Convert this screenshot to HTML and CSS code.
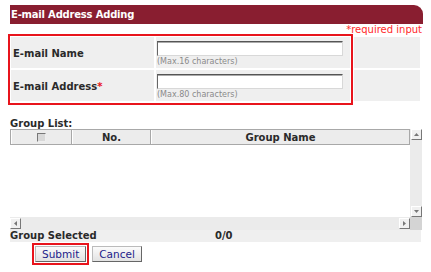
FILE: index.html
```html
<!DOCTYPE html>
<html lang="en">
<head>
  <meta charset="UTF-8" />
  <title>E-mail Address Adding</title>
  <link rel="stylesheet" href="styles.css">
</head>
<body>
  <div class="page">
    <div class="title-bar">E-mail Address Adding</div>
    <div class="required"><span>*required input</span></div>

    <div class="form-area">
      <div class="field-box">
        <div class="label">E-mail Name</div>
        <div class="field">
          <input class="text-input" type="text" />
          <div class="hint">(Max.16 characters)</div>
        </div>
        <div class="label">E-mail Address<span class="star">*</span></div>
        <div class="field">
          <input class="text-input" type="text" />
          <div class="hint">(Max.80 characters)</div>
        </div>
      </div>
      <div class="side">
        <div class="side-cell"></div>
        <div class="side-cell"></div>
      </div>
    </div>

    <div class="group-title">Group List:</div>
    <div class="group-grid">
      <div class="list">
        <div class="list-head">
          <div class="th th-check"><span class="check"></span></div>
          <div class="th th-no">No.</div>
          <div class="th th-name">Group Name</div>
        </div>
      </div>
      <div class="vscroll">
        <div class="sbtn">
          <svg width="5" height="3" viewBox="0 0 5 3"><path d="M0 3 L2.5 0 L5 3 Z" fill="#777"/></svg>
        </div>
        <div class="sbtn">
          <svg width="5" height="3" viewBox="0 0 5 3"><path d="M0 0 L2.5 3 L5 0 Z" fill="#777"/></svg>
        </div>
      </div>
      <div class="hscroll">
        <div class="sbtn">
          <svg width="3" height="5" viewBox="0 0 3 5"><path d="M3 0 L0 2.5 L3 5 Z" fill="#777"/></svg>
        </div>
        <div class="sbtn">
          <svg width="3" height="5" viewBox="0 0 3 5"><path d="M0 0 L3 2.5 L0 5 Z" fill="#777"/></svg>
        </div>
      </div>
      <div class="corner"></div>
    </div>

    <div class="selected-row">
      <span class="selected-label">Group Selected</span>
      <span class="selected-count">0/0</span>
    </div>

    <div class="actions">
      <div class="focus-ring"><button class="btn" type="button">Submit</button></div>
      <button class="btn" type="button">Cancel</button>
    </div>
  </div>
</body>
</html>
```

FILE: styles.css
```css
* { margin: 0; padding: 0; box-sizing: border-box; }
body {
  font-family: 'DejaVu Sans', Verdana, sans-serif;
  font-size: 10px;
  color: #2a2a2a;
  background: #fff;
}
.page {
  padding: 5px 0 0 8px;
  width: 423px;
}
.title-bar {
  margin-left: 2px;
  height: 19px;
  line-height: 19px;
  padding-left: 1px;
  background: #891e30;
  color: #fff;
  font-weight: bold;
  font-size: 10px;
  letter-spacing: -0.2px;
  border-top-right-radius: 9px;
}
.required {
  height: 10px;
  line-height: 11px;
  text-align: right;
  color: #ff2a2a;
  font-size: 10px;
  padding-right: 1px;
}

/* form rows */
.form-area {
  display: flex;
  height: 71px;
}
.field-box {
  border: 2px solid #e8141c;
  padding: 1px;
  display: grid;
  grid-template-columns: 143px 194px;
  grid-template-rows: 31px 31px;
  gap: 2px;
}
.label {
  background: #efefef;
  font-weight: bold;
  font-size: 10px;
  display: flex;
  align-items: center;
  padding-left: 2px;
  padding-top: 2px;
}
.star { color: #e8141c; }
.field {
  background: #efefef;
  padding: 4px 0 0 1px;
}
.text-input {
  display: block;
  width: 186px;
  height: 15px;
  border: 1px solid;
  border-color: #555 #d8d8d8 #d8d8d8 #666;
  box-shadow: inset 0 1px 0 #aaa;
  background: #fff;
}
.hint {
  font-size: 8px;
  line-height: 10px;
  color: #8a8a8a;
  margin-top: 1px;
}
.side {
  display: grid;
  grid-template-rows: 31px 31px;
  gap: 2px;
  padding-top: 3px;
  margin-left: 1px;
  width: 66px;
}
.side-cell { background: #efefef; }

/* group list */
.group-title {
  margin: 13px 0 0 2px;
  font-weight: bold;
  font-size: 10px;
  line-height: 11px;
}
.group-grid {
  margin-left: 2px;
  display: grid;
  grid-template-columns: 400px 12px;
  grid-template-rows: 88px 13px;
}
.list { background: #fff; }
.list-head {
  display: flex;
  height: 16px;
  border: 1px solid #a8a8a8;
  background: #ececec;
}
.th {
  font-weight: bold;
  font-size: 10px;
  display: flex;
  align-items: center;
  justify-content: center;
  border-left: 1px solid #fff;
  border-right: 1px solid #a8a8a8;
}
.th-check { width: 61px; }
.th-no { width: 79px; }
.th-name { flex: 1; border-right: none; }
.check {
  width: 9px;
  height: 9px;
  background: #d8d8d8;
  border: 1px solid;
  border-color: #777 #eee #eee #777;
}
.vscroll {
  background: #ebebeb;
  display: flex;
  flex-direction: column;
  justify-content: space-between;
  padding-left: 1px;
}
.hscroll {
  background: #ebebeb;
  display: flex;
  justify-content: space-between;
  padding-top: 1px;
}
.sbtn {
  width: 11px;
  height: 11px;
  background: #f0f0f0;
  border: 1px solid;
  border-color: #fff #777 #777 #fff;
  display: flex;
  align-items: center;
  justify-content: center;
}
.corner { background: #d4d4d4; }

.selected-row {
  margin-left: 2px;
  width: 411px;
  height: 12px;
  background: #efefef;
  font-weight: bold;
  font-size: 10px;
  line-height: 12px;
  display: flex;
}
.selected-label { width: 205px; }

.actions {
  display: flex;
  align-items: center;
  gap: 3px;
  padding-left: 24px;
  margin-top: 1px;
}
.focus-ring {
  border: 2px solid #e8141c;
  padding: 1px;
}
.btn {
  display: block;
  height: 16px;
  font-family: 'DejaVu Sans', Verdana, sans-serif;
  font-size: 10.5px;
  color: #1c1c8a;
  background: linear-gradient(#fbfbfb, #e2e2e2);
  border: 1px solid;
  border-color: #bbb #666 #666 #bbb;
  padding: 0 6px;
}
```
